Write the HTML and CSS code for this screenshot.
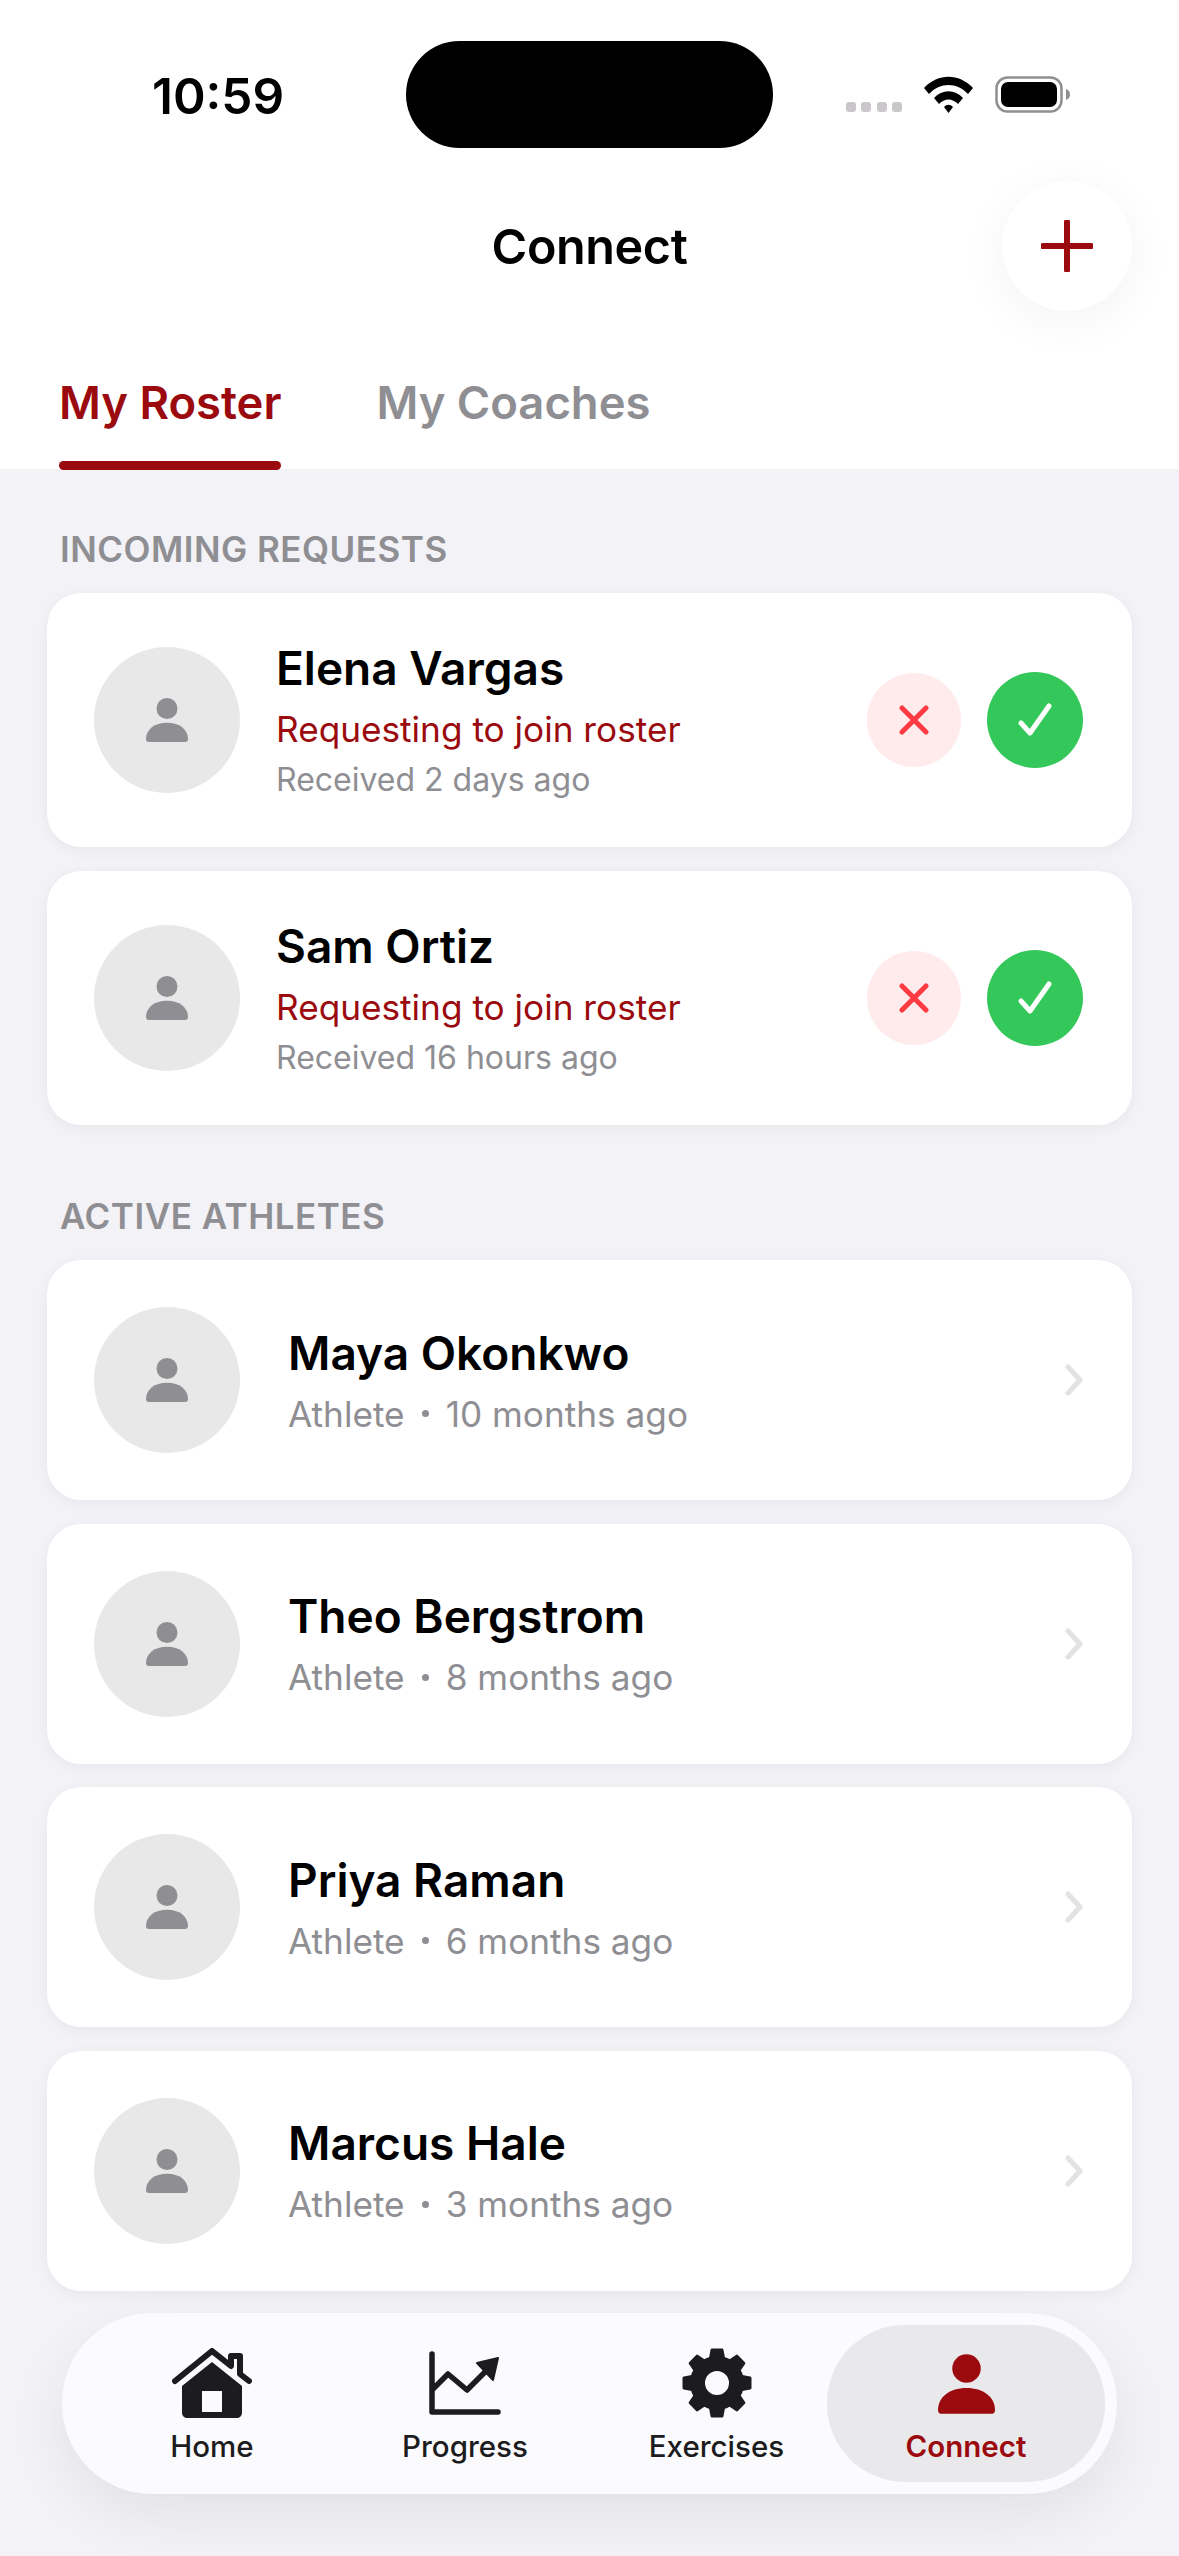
FILE: index.html
```html
<!DOCTYPE html>
<html lang="en">
  <head>
    <meta charset="UTF-8" />
    <meta name="viewport" content="width=device-width, initial-scale=1.0" />
    <title>Connect</title>
    <link rel="stylesheet" href="styles.css">
  </head>
  <body>
    <svg class="defs" width="0" height="0">
      <symbol id="person" viewBox="0 0 44 46">
        <circle cx="22" cy="11" r="11" />
        <path d="M0 43c0-10 9-17 22-17s22 7 22 17c0 2-1 3-3 3H3c-2 0-3-1-3-3z" />
      </symbol>
      <symbol id="chevron" viewBox="0 0 18 32">
        <path d="M3 3l12 13L3 29" fill="none" stroke="currentColor" stroke-width="5" stroke-linecap="round" stroke-linejoin="round" />
      </symbol>
      <symbol id="cross" viewBox="0 0 30 30">
        <path d="M3 3l24 24M27 3L3 27" fill="none" stroke="currentColor" stroke-width="5" stroke-linecap="round" />
      </symbol>
      <symbol id="check" viewBox="0 0 34 34">
        <path d="M3 20l9 10L31 3" fill="none" stroke="currentColor" stroke-width="5" stroke-linecap="round" stroke-linejoin="round" />
      </symbol>
    </svg>

    <header class="top">
      <div class="status-bar">
        <span class="time">10:59</span>
        <div class="island"></div>
        <div class="status-icons">
          <div class="signal"><i></i><i></i><i></i><i></i></div>
          <svg class="wifi" viewBox="0 0 49 37">
            <path d="M0 12C14-3 35-3 49 12l-5 6C33 6 16 6 5 18z" />
            <path d="M10 22c8-9 21-9 29 0l-5 6c-6-6-13-6-19 0z" />
            <path d="M20 31c3-3 6-3 9 0l-4.500 6z" />
          </svg>
          <svg class="battery" viewBox="0 0 76 37">
            <rect x="1.500" y="1.500" width="65" height="34" rx="11" fill="none" stroke="#8e8e93" stroke-width="2.500" />
            <rect x="6" y="6" width="56" height="25" rx="7" fill="#000" />
            <path d="M71 13c3 1 4 3 4 5.500s-1 4.500-4 5.500z" fill="#8e8e93" />
          </svg>
        </div>
      </div>

      <div class="nav-bar">
        <h1>Connect</h1>
        <button class="add-btn">
          <svg viewBox="0 0 52 52"><path d="M26 2v48M2 26h48" fill="none" stroke="currentColor" stroke-width="6" stroke-linecap="round" /></svg>
        </button>
      </div>

      <nav class="tabs">
        <a href="#" class="tab active">My Roster</a>
        <a href="#" class="tab">My Coaches</a>
      </nav>
    </header>

    <main class="content">
      <h2 class="section-title">INCOMING REQUESTS</h2>
      <div class="card request">
        <div class="avatar"><svg><use href="#person" /></svg></div>
        <div class="info">
          <div class="name">Elena Vargas</div>
          <div class="request-text">Requesting to join roster</div>
          <div class="received">Received 2 days ago</div>
        </div>
        <button class="round decline"><svg><use href="#cross" /></svg></button>
        <button class="round accept"><svg><use href="#check" /></svg></button>
      </div>
      <div class="card request">
        <div class="avatar"><svg><use href="#person" /></svg></div>
        <div class="info">
          <div class="name">Sam Ortiz</div>
          <div class="request-text">Requesting to join roster</div>
          <div class="received">Received 16 hours ago</div>
        </div>
        <button class="round decline"><svg><use href="#cross" /></svg></button>
        <button class="round accept"><svg><use href="#check" /></svg></button>
      </div>

      <h2 class="section-title second">ACTIVE ATHLETES</h2>
      <div class="card athlete">
        <div class="avatar"><svg><use href="#person" /></svg></div>
        <div class="info">
          <div class="name">Maya Okonkwo</div>
          <div class="meta"><span>Athlete</span><span class="dot"></span><span>10 months ago</span></div>
        </div>
        <svg class="chevron"><use href="#chevron" /></svg>
      </div>
      <div class="card athlete">
        <div class="avatar"><svg><use href="#person" /></svg></div>
        <div class="info">
          <div class="name">Theo Bergstrom</div>
          <div class="meta"><span>Athlete</span><span class="dot"></span><span>8 months ago</span></div>
        </div>
        <svg class="chevron"><use href="#chevron" /></svg>
      </div>
      <div class="card athlete">
        <div class="avatar"><svg><use href="#person" /></svg></div>
        <div class="info">
          <div class="name">Priya Raman</div>
          <div class="meta"><span>Athlete</span><span class="dot"></span><span>6 months ago</span></div>
        </div>
        <svg class="chevron"><use href="#chevron" /></svg>
      </div>
      <div class="card athlete">
        <div class="avatar"><svg><use href="#person" /></svg></div>
        <div class="info">
          <div class="name">Marcus Hale</div>
          <div class="meta"><span>Athlete</span><span class="dot"></span><span>3 months ago</span></div>
        </div>
        <svg class="chevron"><use href="#chevron" /></svg>
      </div>
    </main>

    <nav class="tab-bar">
      <a href="#" class="tab-item">
        <svg class="tab-icon" viewBox="0 0 80 70">
          <path d="M3 33L40 3l19 15V8h9v18l9 7" fill="none" stroke="currentColor" stroke-width="6" stroke-linecap="round" stroke-linejoin="round" />
          <path fill-rule="evenodd" d="M40 14l30 24v26c0 4-2 6-6 6H16c-4 0-6-2-6-6V38zM30 43v21h20V43z" />
        </svg>
        <span>Home</span>
      </a>
      <a href="#" class="tab-item">
        <svg class="tab-icon progress" viewBox="0 0 72 64">
          <path d="M3 3v58h66M3 39l16-16 19 16 18-18" fill="none" stroke="currentColor" stroke-width="5.500" stroke-linecap="round" stroke-linejoin="round" />
          <path d="M48 12l21-5-5 22z" stroke="currentColor" stroke-width="2" stroke-linejoin="round" />
        </svg>
        <span>Progress</span>
      </a>
      <a href="#" class="tab-item">
        <svg class="tab-icon gear" viewBox="0 0 70 70">
          <circle cx="35" cy="35" r="19.500" fill="none" stroke="currentColor" stroke-width="15" />
          <g stroke="currentColor" stroke-width="3" stroke-linejoin="round">
            <path id="tooth" d="M30 2h10l3 16H27z" />
            <use href="#tooth" transform="rotate(45 35 35)" />
            <use href="#tooth" transform="rotate(90 35 35)" />
            <use href="#tooth" transform="rotate(135 35 35)" />
            <use href="#tooth" transform="rotate(180 35 35)" />
            <use href="#tooth" transform="rotate(225 35 35)" />
            <use href="#tooth" transform="rotate(270 35 35)" />
            <use href="#tooth" transform="rotate(315 35 35)" />
          </g>
        </svg>
        <span>Exercises</span>
      </a>
      <a href="#" class="tab-item active">
        <svg class="tab-icon"><use href="#person" /></svg>
        <span>Connect</span>
      </a>
    </nav>
  </body>
</html>
```

FILE: styles.css
```css
* {
  box-sizing: border-box;
}
body {
  font-family: Inter, "Noto Sans", sans-serif;
  margin: 0;
  width: 1179px;
  height: 2556px;
  position: relative;
  overflow: hidden;
  background-color: #f2f2f7;
  color: #000;
}
a {
  text-decoration: none;
  color: inherit;
}
button {
  border: none;
  padding: 0;
  cursor: pointer;
}
.defs {
  position: absolute;
}

/* top area */
.top {
  background-color: #fff;
  height: 469px;
}
.status-bar {
  display: flex;
  align-items: flex-start;
  padding: 41px 0 0 152px;
  height: 148px;
}
.time {
  width: 254px;
  font-size: 49.500px;
  font-weight: 600;
  line-height: 54px;
  margin-top: 28px;
}
.island {
  width: 367px;
  height: 107px;
  border-radius: 54px;
  background-color: #000;
}
.status-icons {
  display: flex;
  align-items: flex-end;
  margin: 35px 0 0 73px;
  height: 37px;
}
.signal {
  display: flex;
  gap: 5.300px;
  margin-bottom: 1px;
}
.signal i {
  width: 10px;
  height: 10px;
  border-radius: 3px;
  background-color: #c9c7c9;
}
.wifi {
  width: 49px;
  height: 37px;
  margin-left: 22px;
}
.battery {
  width: 76px;
  height: 37px;
  margin-left: 22px;
}
.nav-bar {
  display: grid;
  grid-template-columns: 1fr auto 1fr;
  align-items: center;
  height: 130px;
  margin-top: 33px;
  padding-right: 47px;
  padding-left: 47px;
}
h1 {
  grid-column: 2;
  margin: 0;
  font-size: 48.500px;
  font-weight: 600;
  letter-spacing: -0.4px;
}
.add-btn {
  grid-column: 3;
  justify-self: end;
  width: 130px;
  height: 130px;
  border-radius: 50%;
  background-color: #fff;
  color: #9b0a0e;
  box-shadow: 0 10px 50px rgba(0, 0, 0, 0.05);
  display: flex;
  align-items: center;
  justify-content: center;
}
.add-btn svg {
  width: 52px;
  height: 52px;
}
.tabs {
  display: flex;
  gap: 95px;
  padding-left: 59px;
  margin-top: 65px;
}
.tab {
  position: relative;
  height: 94px;
  font-size: 45.400px;
  font-weight: 600;
  line-height: 54px;
  color: #8e8e93;
}
.tab.active {
  color: #9b0a0e;
}
.tab.active::after {
  content: '';
  position: absolute;
  left: 0;
  right: 0;
  top: 85px;
  height: 9px;
  border-radius: 5px;
  background-color: #9b0a0e;
}

/* lists */
.content {
  padding: 0 47px;
}
.section-title {
  margin: 0;
  padding: 59px 13px 0;
  height: 124px;
  font-size: 35px;
  font-weight: 600;
  line-height: 42px;
  letter-spacing: 0.5px;
  color: #8e8e93;
}
.section-title.second {
  height: 111px;
  padding-top: 46px;
}
.card {
  display: flex;
  align-items: center;
  background-color: #fff;
  border-radius: 34px;
  padding: 0 46px 0 47px;
  margin-bottom: 24px;
  box-shadow: 0 3px 14px rgba(0, 0, 0, 0.05);
}
.card.request {
  height: 254px;
}
.card.athlete {
  height: 240px;
  margin-bottom: 23.500px;
}
.avatar {
  flex: none;
  width: 146px;
  height: 146px;
  border-radius: 50%;
  background-color: #e8e8e8;
  display: flex;
  align-items: center;
  justify-content: center;
}
.avatar svg {
  width: 42px;
  height: 44px;
  fill: #8e8e93;
}
.info {
  flex: 1;
  min-width: 0;
}
.request .info {
  padding-left: 36px;
}
.athlete .info {
  padding-left: 48px;
}
.name {
  font-size: 46px;
  font-weight: 580;
  line-height: 54px;
}
.request-text {
  font-size: 35.200px;
  line-height: 42px;
  margin-top: 13px;
  color: #9b0a0e;
}
.received {
  font-size: 32px;
  line-height: 38px;
  margin-top: 11px;
  color: #8e8e93;
}
.meta {
  display: flex;
  align-items: center;
  font-size: 35.200px;
  line-height: 42px;
  margin-top: 13px;
  color: #8e8e93;
}
.dot {
  width: 7px;
  height: 7px;
  border-radius: 50%;
  background-color: #8e8e93;
  margin: 0 17px;
}
.round {
  flex: none;
  border-radius: 50%;
  display: flex;
  align-items: center;
  justify-content: center;
}
.decline {
  width: 94px;
  height: 94px;
  background-color: #ffebec;
  color: #ff3b42;
}
.decline svg {
  width: 30px;
  height: 30px;
}
.accept {
  width: 96px;
  height: 96px;
  margin-left: 26px;
  margin-right: 3px;
  background-color: #34c85a;
  color: #fff;
}
.accept svg {
  width: 34px;
  height: 34px;
}
.chevron {
  flex: none;
  width: 18px;
  height: 32px;
  margin-right: 3px;
  color: #e2e2e2;
}

/* bottom tab bar, floats over the list */
.tab-bar {
  position: absolute;
  left: 62px;
  top: 2313px;
  width: 1055px;
  height: 181px;
  border-radius: 90px;
  background-color: #fbfbfd;
  box-shadow: 0 22px 60px rgba(0, 0, 0, 0.07);
  display: grid;
  grid-template-columns: 224px 282px 221px 278px;
  padding: 12px 12px 12px 38px;
}
.tab-item {
  display: flex;
  flex-direction: column;
  align-items: center;
  color: #1c1c1e;
  font-size: 29.500px;
  font-weight: 500;
  line-height: 36px;
  padding-top: 23px;
}
.tab-item span {
  margin-top: 10px;
}
.tab-icon {
  width: 80px;
  height: 70px;
  fill: currentColor;
}
.tab-icon.progress {
  width: 72px;
  height: 64px;
  margin: 3px 0;
}
.tab-icon.gear {
  width: 72px;
}
.tab-item.active {
  color: #9b0a0e;
  background-color: #e9e9eb;
  border-radius: 78px;
  font-weight: 600;
}
.tab-item.active .tab-icon {
  width: 57px;
  height: 60px;
  margin: 6px 0 4px;
}
```
